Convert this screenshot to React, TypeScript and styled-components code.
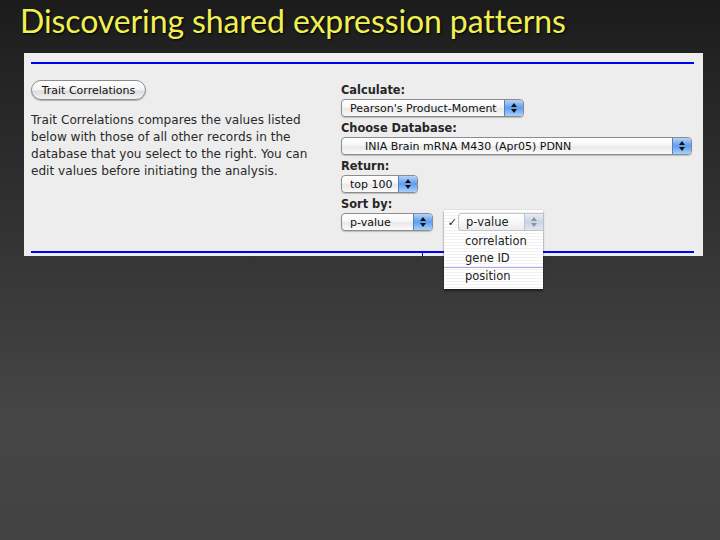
import React from 'react';
import styled, { createGlobalStyle } from 'styled-components';

const GlobalStyle = createGlobalStyle`
  html, body {
    margin: 0;
    padding: 0;
    height: 100%;
  }
  body {
    background: linear-gradient(180deg, #1b1b1b 0%, #232323 12%, #343434 45%, #464646 78%, #424242 100%);
    font-family: "DejaVu Sans", "Liberation Sans", sans-serif;
  }
  #root {
    height: 540px;
  }
`;

const Slide = styled.div`
  width: 720px;
  height: 540px;
  overflow: hidden;
`;

const Title = styled.h1`
  margin: 0;
  padding: 1px 0 0 20px;
  height: 52px;
  box-sizing: border-box;
  font-family: Lato, "Open Sans", sans-serif;
  font-weight: 400;
  font-size: 32px;
  line-height: 40px;
  color: #f0f055;
  text-shadow: 1px 1px 2px #000;
  letter-spacing: -0.1px;
`;

const Panel = styled.div`
  margin: 1px 0 0 24px;
  width: 679px;
  background: #ededed;
  padding: 9px 9px 3px 7px;
  box-sizing: border-box;
`;

const Rule = styled.div<{ $tick?: boolean }>`
  height: 2px;
  background: #0000f5;
  position: relative;
  ${(p) =>
    p.$tick &&
    `&::after {
      content: '';
      position: absolute;
      left: 391px;
      top: 2px;
      width: 1px;
      height: 4px;
      background: #0000f5;
    }`}
`;

const Columns = styled.div`
  display: flex;
  padding: 16px 0 16px;
`;

const Left = styled.div`
  width: 309px;
  color: #222;
`;

const Right = styled.div`
  flex: 1;
  display: flex;
  flex-direction: column;
  padding-top: 3px;
`;

const PillButton = styled.button`
  display: block;
  height: 20px;
  width: 115px;
  border: 1px solid #8a8a8a;
  border-radius: 10px;
  background: linear-gradient(180deg, #ffffff 0%, #f3f3f3 50%, #dcdcdc 55%, #f2f2f2 100%);
  box-shadow: 0 1px 1px rgba(0, 0, 0, 0.25);
  font-family: "DejaVu Sans", sans-serif;
  font-size: 11px;
  color: #111;
  padding: 0;
  margin-bottom: 12px;
`;

const Para = styled.p`
  margin: 0;
  line-height: 17px;
  font-size: 12.1px;
  color: #2a2a2a;
  white-space: nowrap;
`;

const Label = styled.div`
  font-weight: bold;
  font-size: 11.4px;
  color: #262626;
  height: 16px;
  line-height: 14px;
  padding-left: 1px;
`;

const Group = styled.div`
  margin-bottom: 4px;
  position: relative;
`;

const SelectBox = styled.div<{ $w: number }>`
  width: ${(p) => p.$w}px;
  height: 18px;
  margin-left: 1px;
  box-sizing: border-box;
  border: 1px solid #8c8c8c;
  border-radius: 4px;
  background: linear-gradient(180deg, #ffffff 0%, #f6f6f6 45%, #e8e8e8 55%, #fbfbfb 100%);
  box-shadow: 0 1px 1px rgba(0, 0, 0, 0.2);
  display: flex;
  align-items: center;
  overflow: hidden;
  font-size: 11px;
  color: #111;
`;

const SelectText = styled.span<{ $indent?: number }>`
  flex: 1;
  padding-left: ${(p) => p.$indent ?? 8}px;
  white-space: nowrap;
`;

const Stepper = styled.span<{ $muted?: boolean }>`
  width: 18px;
  height: 100%;
  display: flex;
  align-items: center;
  justify-content: center;
  border-left: 1px solid ${(p) => (p.$muted ? '#b8c4d4' : '#5a7fb8')};
  background: ${(p) =>
    p.$muted
      ? 'linear-gradient(180deg, #e6ecf4 0%, #c9d4e2 50%, #dfe6ef 100%)'
      : 'linear-gradient(180deg, #b7d2f7 0%, #5d9cf0 50%, #a9d0fb 100%)'};
`;

const Arrows = ({ muted }: { muted?: boolean }) => (
  <svg width="6" height="10" viewBox="0 0 6 10">
    <path d="M3 0 L6 4 L0 4 Z M0 6 L6 6 L3 10 Z" fill={muted ? '#8a96a6' : '#111'} />
  </svg>
);

const Select = ({ w, text, indent }: { w: number; text: string; indent?: number }) => (
  <SelectBox $w={w}>
    <SelectText $indent={indent}>{text}</SelectText>
    <Stepper>
      <Arrows />
    </Stepper>
  </SelectBox>
);

const Menu = styled.div`
  position: absolute;
  left: 104px;
  top: 13px;
  z-index: 5;
  width: 99px;
  height: 79px;
  background: repeating-linear-gradient(180deg, #ffffff 0px, #ffffff 2px, #f1f1f1 2px, #f1f1f1 3px);
  box-shadow: 0 2px 2px rgba(0, 0, 0, 0.45), 0 0 1px rgba(0, 0, 0, 0.3);
  padding-top: 3px;
  box-sizing: border-box;
  font-size: 11.5px;
  color: #222;
`;

const MenuCurrent = styled.div`
  display: flex;
  align-items: center;
  height: 18px;
  margin-bottom: 2px;
`;

const Check = styled.span`
  width: 13px;
  text-align: right;
  font-size: 11px;
  padding-right: 1px;
`;

const CurrentBox = styled.div`
  flex: 1;
  height: 18px;
  box-sizing: border-box;
  border: 1px solid #c4c4c4;
  border-right: none;
  border-radius: 4px 0 0 4px;
  display: flex;
  align-items: center;
  background: linear-gradient(180deg, #ffffff 0%, #f7f7f7 50%, #ececec 100%);
`;

const CurrentText = styled.span`
  flex: 1;
  padding-left: 7px;
`;

const MenuItem = styled.div<{ $line?: boolean }>`
  height: 17px;
  line-height: 17px;
  padding-left: 21px;
  ${(p) => p.$line && 'border-top: 1px solid #a9a9f2; height: 16px;'}
`;

export default function App() {
  return (
    <Slide>
      <GlobalStyle />
      <Title>Discovering shared expression patterns</Title>
      <Panel>
        <Rule />
        <Columns>
          <Left>
            <PillButton>Trait Correlations</PillButton>
            <Para>
              Trait Correlations compares the values listed
              <br />
              below with those of all other records in the
              <br />
              database that you select to the right. You can
              <br />
              edit values before initiating the analysis.
            </Para>
          </Left>
          <Right>
            <Group>
              <Label>Calculate:</Label>
              <Select w={183} text="Pearson's Product-Moment" />
            </Group>
            <Group>
              <Label>Choose Database:</Label>
              <Select w={351} text="INIA Brain mRNA M430 (Apr05) PDNN" indent={23} />
            </Group>
            <Group>
              <Label>Return:</Label>
              <Select w={77} text="top 100" />
            </Group>
            <Group>
              <Label>Sort by:</Label>
              <Select w={92} text="p-value" />
              <Menu>
                <MenuCurrent>
                  <Check>✓</Check>
                  <CurrentBox>
                    <CurrentText>p-value</CurrentText>
                    <Stepper $muted>
                      <Arrows muted />
                    </Stepper>
                  </CurrentBox>
                </MenuCurrent>
                <MenuItem>correlation</MenuItem>
                <MenuItem>gene ID</MenuItem>
                <MenuItem $line>position</MenuItem>
              </Menu>
            </Group>
          </Right>
        </Columns>
        <Rule $tick />
      </Panel>
    </Slide>
  );
}
